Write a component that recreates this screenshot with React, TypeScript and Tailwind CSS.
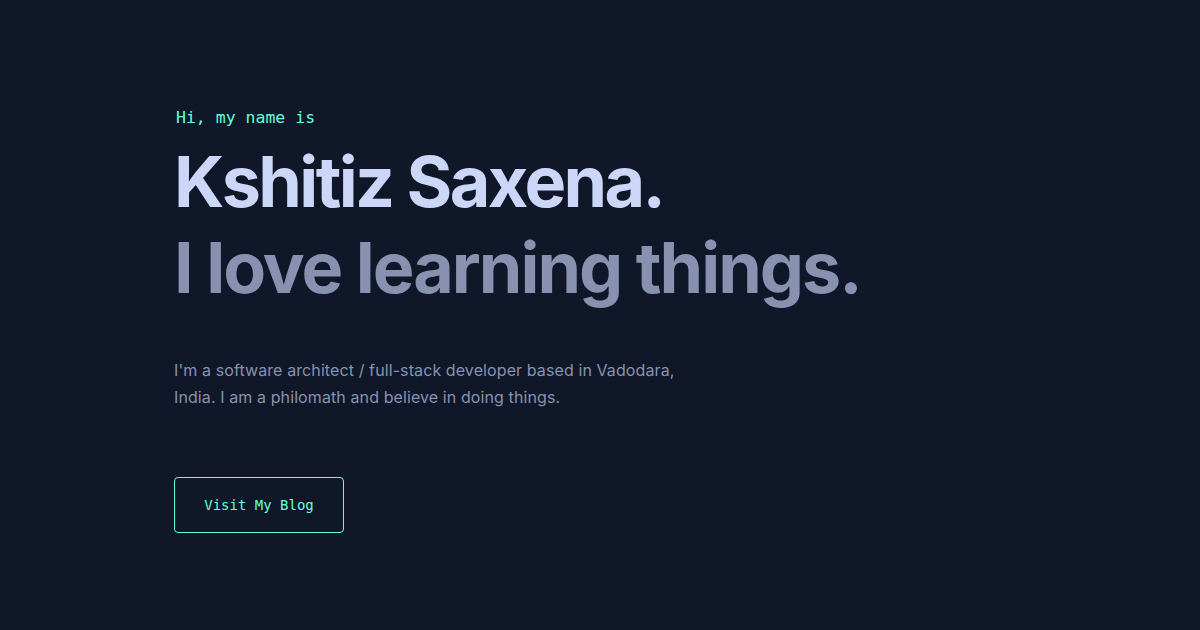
export default function App() {
  return (
    <main className="w-[1200px] h-[630px] bg-[#0f1729] overflow-hidden">
      <section className="pl-[174px] pt-[107px] flex flex-col items-start">
        <p className="text-[#64ffda] text-[16.5px] leading-[22px] pl-[2px] font-['DejaVu_Sans_Mono',monospace]">
          Hi, my name is
        </p>
        <h1 className="mt-[10px] text-[#ccd6f6] text-[70px] leading-[86px] font-bold font-['Inter',sans-serif] tracking-[-2.6px]">
          Kshitiz Saxena.
        </h1>
        <h2 className="text-[#8892b0] text-[70px] leading-[86px] font-bold font-['Inter',sans-serif] tracking-[-2px]">
          I love learning things.
        </h2>
        <p className="mt-[46px] w-[530px] text-[#8892b0] text-[16px] leading-[27px] font-['Inter',sans-serif] tracking-[0.1px]">
          I'm a software architect / full-stack developer based in Vadodara, India. I am a philomath and believe in doing things.
        </p>
        <a
          href="#"
          className="mt-[66px] w-[170px] h-[56px] flex items-center justify-center border border-[#64ffda] rounded-[4px] text-[#64ffda] text-[14px] font-['DejaVu_Sans_Mono',monospace]"
        >
          Visit My Blog
        </a>
      </section>
    </main>
  );
}
